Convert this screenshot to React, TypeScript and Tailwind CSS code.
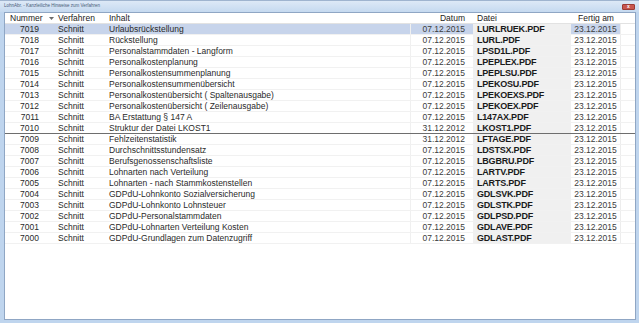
import React from "react";

type Row = { nr: string; inhalt: string; datum: string; datei: string };

const ROWS: Row[] = [
  { nr: "7019", inhalt: "Urlaubsrückstellung", datum: "07.12.2015", datei: "LURLRUEK.PDF" },
  { nr: "7018", inhalt: "Rückstellung", datum: "07.12.2015", datei: "LURL.PDF" },
  { nr: "7017", inhalt: "Personalstammdaten - Langform", datum: "07.12.2015", datei: "LPSD1L.PDF" },
  { nr: "7016", inhalt: "Personalkostenplanung", datum: "07.12.2015", datei: "LPEPLEX.PDF" },
  { nr: "7015", inhalt: "Personalkostensummenplanung", datum: "07.12.2015", datei: "LPEPLSU.PDF" },
  { nr: "7014", inhalt: "Personalkostensummenübersicht", datum: "07.12.2015", datei: "LPEKOSU.PDF" },
  { nr: "7013", inhalt: "Personalkostenübersicht ( Spaltenausgabe)", datum: "07.12.2015", datei: "LPEKOEXS.PDF" },
  { nr: "7012", inhalt: "Personalkostenübersicht ( Zeilenausgabe)", datum: "07.12.2015", datei: "LPEKOEX.PDF" },
  { nr: "7011", inhalt: "BA Erstattung § 147 A", datum: "07.12.2015", datei: "L147AX.PDF" },
  { nr: "7010", inhalt: "Struktur der Datei LKOST1", datum: "31.12.2012", datei: "LKOST1.PDF" },
  { nr: "7009", inhalt: "Fehlzeitenstatistik", datum: "31.12.2012", datei: "LFTAGE.PDF" },
  { nr: "7008", inhalt: "Durchschnittsstundensatz", datum: "07.12.2015", datei: "LDSTSX.PDF" },
  { nr: "7007", inhalt: "Berufsgenossenschaftsliste", datum: "07.12.2015", datei: "LBGBRU.PDF" },
  { nr: "7006", inhalt: "Lohnarten nach Verteilung", datum: "07.12.2015", datei: "LARTV.PDF" },
  { nr: "7005", inhalt: "Lohnarten - nach Stammkostenstellen", datum: "07.12.2015", datei: "LARTS.PDF" },
  { nr: "7004", inhalt: "GDPdU-Lohnkonto Sozialversicherung", datum: "07.12.2015", datei: "GDLSVK.PDF" },
  { nr: "7003", inhalt: "GDPdU-Lohnkonto Lohnsteuer", datum: "07.12.2015", datei: "GDLSTK.PDF" },
  { nr: "7002", inhalt: "GDPdU-Personalstammdaten", datum: "07.12.2015", datei: "GDLPSD.PDF" },
  { nr: "7001", inhalt: "GDPdU-Lohnarten Verteilung Kosten", datum: "07.12.2015", datei: "GDLAVE.PDF" },
  { nr: "7000", inhalt: "GDPdU-Grundlagen zum Datenzugriff", datum: "07.12.2015", datei: "GDLAST.PDF" },
];

export default function App() {
  return (
    <div className="w-[639px] h-[323px] overflow-hidden bg-[#bfd5ee] flex flex-col font-['Liberation_Sans',Arial,sans-serif] text-[8.5px] leading-none">
      {/* Titelleiste */}
      <div className="h-[12px] flex items-center justify-between pl-[4px] pr-[4px] bg-gradient-to-b from-[#dde9f6] to-[#c5d9f0] border-t border-[#9fb4cf]">
        <span className="text-[4.5px] text-[#4a5d78] whitespace-nowrap">LohnAbr. - Kanzleiliche Hinweise zum Verfahren</span>
        <span className="w-[13px] h-[6px] rounded-[1px] bg-[#c9574e] border border-[#9c3b35] flex items-center justify-center text-[5px] font-bold text-white">x</span>
      </div>

      <div className="flex-1 ml-[4px] mr-[3px] mb-[3px] bg-white border border-[#8fa6c4] flex flex-col">
        {/* Kopfzeile */}
        <div className="h-[11px] flex items-center border-b border-[#e2e2e2] text-[#222]">
          <div className="w-[51px] pl-[5px] flex items-center gap-[6px]">
            <span>Nummer</span>
            <svg width="5" height="3" viewBox="0 0 5 3" className="mt-[1px]">
              <path d="M0 0 L5 0 L2.5 3 Z" fill="#6b6b6b" />
            </svg>
          </div>
          <div className="w-[52px] pl-[2px]">Verfahren</div>
          <div className="w-[303px] pl-[1px]">Inhalt</div>
          <div className="w-[62px] text-right pr-[8px]">Datum</div>
          <div className="w-[98px] pl-[4px]">Datei</div>
          <div className="w-[50px] text-center">Fertig am</div>
        </div>

        {ROWS.map((r, i) => {
          const sel = i === 0;
          const bg = sel ? "bg-[#c7d4eb]" : "";
          return (
            <div
              key={r.nr}
              className={`h-[11px] flex items-stretch text-[#2a2a2a] ${
                r.nr === "7010" ? "border-b border-[#6e6e6e]" : "border-b border-[#f1f1f1]"
              }`}
            >
              <div className={`w-[51px] flex items-center justify-end pr-[17px] ${bg}`}>{r.nr}</div>
              <div className={`w-[52px] flex items-center pl-[2px] ${bg}`}>Schnitt</div>
              <div className={`w-[303px] flex items-center pl-[1px] whitespace-nowrap border-r border-[#f0f0f0] ${bg}`}>
                {r.inhalt}
              </div>
              <div className={`w-[62px] flex items-center justify-end pr-[8px] text-[#3c3c3c] ${bg}`}>{r.datum}</div>
              <div className="w-[98px] flex items-center pl-[4px] bg-[#f0f0f0] font-bold text-[9px] tracking-[-0.2px] text-[#1a1a1a]">
                {r.datei}
              </div>
              <div className={`w-[50px] flex items-center justify-center text-[#3c3c3c] border-r border-[#ededed] ${bg}`}>
                23.12.2015
              </div>
            </div>
          );
        })}
      </div>
    </div>
  );
}
